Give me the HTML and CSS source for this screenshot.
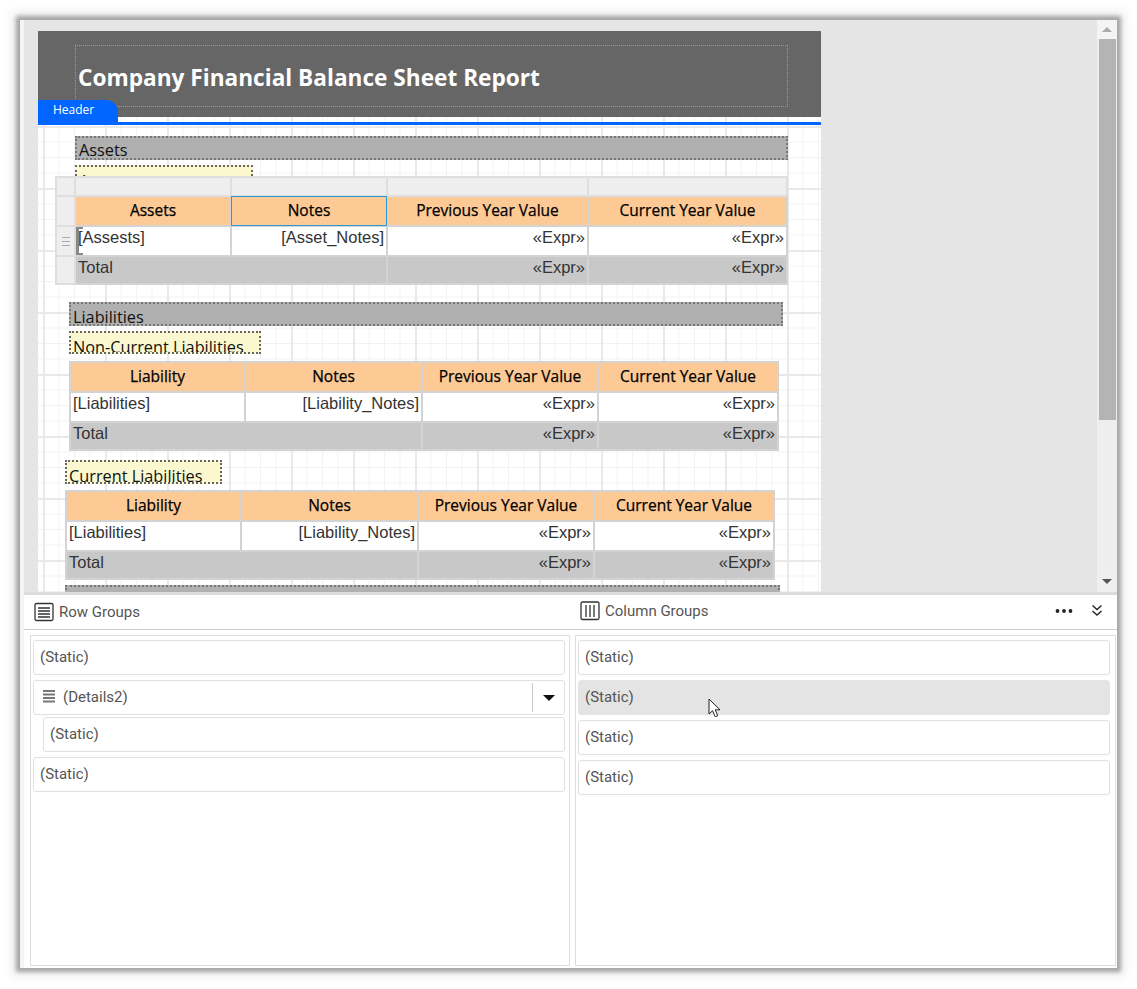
FILE: index.html
```html
<!DOCTYPE html>
<html lang="en">
<head>
  <meta charset="UTF-8" />
  <title>Report Designer</title>
  <link rel="stylesheet" href="styles.css">
</head>
<body>
  <div class="window">

    <div class="designer">
      <div class="canvas">
        <div class="page">
          <div class="page-header">
            <div class="title-box">Company Financial Balance Sheet Report</div>
            <div class="band-tab">Header</div>
          </div>
          <div class="band-line"></div>

          <div class="bar bar-assets">Assets</div>
          <div class="note note-assets">Assets</div>

          <table class="tablix tablix-assets">
            <colgroup>
              <col class="c-handle"><col class="c-a1"><col class="c-a2"><col class="c-a3"><col class="c-a4">
            </colgroup>
            <tr class="row-handle">
              <td class="handle"></td><td class="handle"></td><td class="handle"></td><td class="handle"></td><td class="handle"></td>
            </tr>
            <tr class="row-head">
              <td class="handle"></td>
              <th>Assets</th>
              <th class="selected">Notes</th>
              <th>Previous Year Value</th>
              <th>Current Year Value</th>
            </tr>
            <tr class="row-data">
              <td class="handle"><span class="grip"></span></td>
              <td class="focus-corner">[Assests]</td>
              <td class="num">[Asset_Notes]</td>
              <td class="num">«Expr»</td>
              <td class="num">«Expr»</td>
            </tr>
            <tr class="row-total">
              <td class="handle"></td>
              <td colspan="2">Total</td>
              <td class="num">«Expr»</td>
              <td class="num">«Expr»</td>
            </tr>
          </table>

          <div class="bar bar-liab">Liabilities</div>
          <div class="note note-noncurrent">Non-Current Liabilities</div>

          <table class="tablix tablix-noncurrent">
            <colgroup>
              <col class="c-l1"><col class="c-l2"><col class="c-l3"><col class="c-l4">
            </colgroup>
            <tr class="row-head">
              <th>Liability</th>
              <th>Notes</th>
              <th>Previous Year Value</th>
              <th>Current Year Value</th>
            </tr>
            <tr class="row-data">
              <td>[Liabilities]</td>
              <td class="num">[Liability_Notes]</td>
              <td class="num">«Expr»</td>
              <td class="num">«Expr»</td>
            </tr>
            <tr class="row-total">
              <td colspan="2">Total</td>
              <td class="num">«Expr»</td>
              <td class="num">«Expr»</td>
            </tr>
          </table>

          <div class="note note-current">Current Liabilities</div>

          <table class="tablix tablix-current">
            <colgroup>
              <col class="c-l1"><col class="c-l2"><col class="c-l3"><col class="c-l4">
            </colgroup>
            <tr class="row-head">
              <th>Liability</th>
              <th>Notes</th>
              <th>Previous Year Value</th>
              <th>Current Year Value</th>
            </tr>
            <tr class="row-data">
              <td>[Liabilities]</td>
              <td class="num">[Liability_Notes]</td>
              <td class="num">«Expr»</td>
              <td class="num">«Expr»</td>
            </tr>
            <tr class="row-total">
              <td colspan="2">Total</td>
              <td class="num">«Expr»</td>
              <td class="num">«Expr»</td>
            </tr>
          </table>

          <div class="bar bar-next"></div>
        </div>
      </div>

      <div class="scrollbar">
        <div class="scroll-btn"><span class="arrow-up"></span></div>
        <div class="scroll-thumb"></div>
        <div class="scroll-track"></div>
        <div class="scroll-btn scroll-btn-down"><span class="arrow-down"></span></div>
      </div>
    </div>

    <div class="groups">
      <div class="groups-head">
        <div class="groups-title groups-title-row">
          <svg width="20" height="20" viewBox="0 0 20 20" fill="none" stroke="#333" stroke-width="1.3">
            <rect x="1" y="1.5" width="18" height="17" rx="1.5"/>
            <path d="M4 6h12M4 9h12M4 12h12M4 15h12"/>
          </svg>
          <span>Row Groups</span>
        </div>
        <div class="groups-title groups-title-col">
          <svg width="20" height="20" viewBox="0 0 20 20" fill="none" stroke="#333" stroke-width="1.3">
            <rect x="1" y="1" width="18" height="17.5" rx="1.5"/>
            <path d="M6 4v12M10 4v12M14 4v12"/>
          </svg>
          <span>Column Groups</span>
        </div>
        <div class="groups-tools">
          <svg width="18" height="6" viewBox="0 0 18 6" fill="#222">
            <circle cx="2.5" cy="3" r="1.9"/><circle cx="9" cy="3" r="1.9"/><circle cx="15.5" cy="3" r="1.9"/>
          </svg>
          <svg width="12" height="13" viewBox="0 0 12 13" fill="none" stroke="#222" stroke-width="1.4">
            <path d="M1.5 1.5l4.5 4 4.5-4M1.5 7l4.5 4 4.5-4"/>
          </svg>
        </div>
      </div>

      <div class="groups-body">
        <div class="pane pane-row">
          <div class="group-item">(Static)</div>
          <div class="group-item group-item-details">
            <svg width="12" height="13" viewBox="0 0 12 13" fill="#777">
              <rect y="0" width="12" height="2"/><rect y="3.5" width="12" height="2"/><rect y="7" width="12" height="2"/><rect y="10.5" width="12" height="2"/>
            </svg>
            <span class="group-name">(Details2)</span>
            <span class="group-drop"><span class="arrow-drop"></span></span>
          </div>
          <div class="group-item group-item-child">(Static)</div>
          <div class="group-item group-item-last">(Static)</div>
        </div>
        <div class="pane pane-col">
          <div class="group-item">(Static)</div>
          <div class="group-item group-item-active">
            (Static)
            <svg class="cursor" width="14" height="20" viewBox="0 0 14 20">
              <path d="M1 1v15l3.6-3.3 2.6 6 2.6-1.1-2.6-5.8H12z" fill="#fff" stroke="#222" stroke-width="1"/>
            </svg>
          </div>
          <div class="group-item">(Static)</div>
          <div class="group-item">(Static)</div>
        </div>
      </div>
    </div>

  </div>
</body>
</html>
```

FILE: styles.css
```css
:root {
  --line: #d3d3d3;
  --orange: #fdca96;
  --total: #c8c8c8;
  --handle: #eeeeee;
  --blue: #0066ff;
}

html, body {
  height: 100%;
}

body {
  margin: 0;
  background: #fff;
  overflow: hidden;
  font-family: Roboto, sans-serif;
}

.window {
  margin: 20px 20px 0;
  width: 1097px;
  height: 948px;
  padding-left: 4px;
  box-sizing: border-box;
  background: #f4f4f4;
  box-shadow: 0 0 4px 4px rgba(0, 0, 0, 0.3), 0 0 10px 8px rgba(0, 0, 0, 0.08);
  display: flex;
  flex-direction: column;
}

/* design surface */
.designer {
  display: flex;
  height: 575px;
  flex: none;
  border-bottom: 3px solid #ddd;
  box-sizing: border-box;
}

.canvas {
  flex: 1;
  background: #e5e5e5;
  padding: 11px 0 0 14px;
  overflow: hidden;
}

.page {
  width: 783px;
  height: 700px;
  background-color: #fff;
  background-image:
    linear-gradient(to right, #e9e9e9 2px, transparent 2px),
    linear-gradient(to bottom, #e9e9e9 2px, transparent 2px),
    linear-gradient(to right, #f2f2f2 1px, transparent 1px),
    linear-gradient(to bottom, #f2f2f2 1px, transparent 1px);
  background-size: 62px 62px, 62px 62px, 15.5px 15.5px, 15.5px 15.5px;
  background-position: 5px 0, 0 33px, 5px 0, 0 2px;
  overflow: hidden;
}

.page-header {
  position: relative;
  background: #666;
  height: 86px;
  padding: 14px 33px 0 37px;
  box-sizing: border-box;
}

.title-box {
  height: 62px;
  border: 1px dotted #999;
  box-sizing: border-box;
  padding: 17px 0 0 2px;
  color: #fff;
  font: bold 22.65px/30px "Open Sans", sans-serif;
  white-space: nowrap;
}

.band-tab {
  position: absolute;
  left: 0;
  top: 69px;
  width: 80px;
  height: 25px;
  background: var(--blue);
  border-top-right-radius: 12px;
  color: #fff;
  font: 12px/20px "Open Sans", sans-serif;
  padding-left: 15px;
  box-sizing: border-box;
}

.band-line {
  height: 8px;
  box-sizing: border-box;
  border-bottom: 3px solid var(--blue);
}

.bar {
  box-sizing: border-box;
  height: 24px;
  background: #b0b0b0;
  border: 2px dotted #777;
  padding: 1px 0 0 2px;
  color: #111;
  font: 16.3px/22px "Open Sans", sans-serif;
  overflow: hidden;
}

.bar-assets {
  margin: 11px 33px 0 37px;
}

.bar-liab {
  margin: 17px 38px 0 31px;
  padding-top: 2px;
}

.bar-next {
  margin: 5px 41px 0 27px;
}

.note {
  box-sizing: border-box;
  height: 23px;
  background: #fbf8d0;
  border: 2px dotted #666;
  padding: 3px 0 0 2px;
  color: #111;
  font: 16.3px/22px "Open Sans", sans-serif;
  overflow: hidden;
  white-space: nowrap;
}

.note-assets {
  width: 178px;
  margin: 5px 0 -12px 37px;
}

.note-noncurrent {
  width: 192px;
  margin: 5px 0 7px 31px;
}

.note-current {
  width: 157px;
  height: 24px;
  margin: 9px 0 6px 27px;
}

/* report tables */
.tablix {
  position: relative;
  border-collapse: collapse;
  table-layout: fixed;
  background: #fff;
  color: #333;
  font: 16.5px/20px "Liberation Sans", sans-serif;
}

.tablix td, .tablix th {
  border: 2px solid var(--line);
  padding: 0 2px;
  box-sizing: border-box;
  overflow: hidden;
  white-space: nowrap;
}

.tablix th {
  background: var(--orange);
  color: #000;
  font: 500 15.5px/20px "Open Sans", sans-serif;
  -webkit-text-stroke: 0.25px #000;
  text-align: center;
  vertical-align: middle;
  padding-bottom: 2px;
}

.tablix-assets { width: 731px; margin-left: 17px; }
.tablix-noncurrent { width: 708px; margin-left: 31px; }
.tablix-current { width: 708px; margin-left: 27px; }

.c-handle { width: 19px; }
.c-a1 { width: 156px; }
.c-a2 { width: 156px; }
.c-a3 { width: 201px; }
.c-a4 { width: 199px; }

.c-l1 { width: 175px; }
.c-l2 { width: 177px; }
.c-l3 { width: 176px; }
.c-l4 { width: 180px; }

.row-handle td { height: 19px; }
.row-head th, .row-head td { height: 30px; }
.row-data td { height: 30px; vertical-align: top; padding-top: 0; }
.row-total td { height: 28px; vertical-align: top; padding-top: 0; background: var(--total); }

.tablix .handle {
  background: var(--handle);
  border-color: #dedede;
  padding: 0;
  vertical-align: middle;
  text-align: center;
}

.tablix .num {
  text-align: right;
}

.tablix th.selected {
  outline: 1px solid #2a9ad8;
  outline-offset: -1px;
}

.grip {
  display: block;
  width: 8px;
  height: 7px;
  margin: 0 auto;
  border-top: 1px solid #aaa;
  border-bottom: 1px solid #aaa;
  background: linear-gradient(#aaa, #aaa) 0 50% / 100% 1px no-repeat;
}

.focus-corner {
  background:
    linear-gradient(#888, #888) 0 0 / 3px 100% no-repeat,
    linear-gradient(#888, #888) 0 0 / 7px 2px no-repeat,
    linear-gradient(#888, #888) 0 100% / 7px 2px no-repeat;
}

/* scrollbar */
.scrollbar {
  width: 20px;
  flex: none;
  display: flex;
  flex-direction: column;
  background: #eee;
}

.scroll-btn {
  height: 19px;
  background: #f4f4f4;
  display: flex;
  align-items: center;
  justify-content: center;
  flex: none;
}

.scroll-btn-down {
  height: 22px;
  background: #efefef;
}

.arrow-up {
  border: 5px solid transparent;
  border-top: 0;
  border-bottom: 5px solid #aaa;
}

.arrow-down {
  border: 5px solid transparent;
  border-bottom: 0;
  border-top: 5px solid #555;
}

.scroll-thumb {
  height: 381px;
  margin: 0 1px 0 2px;
  background: #b4b4b4;
  flex: none;
}

.scroll-track {
  flex: 1;
}

/* groups panel */
.groups {
  flex: 1;
  display: flex;
  flex-direction: column;
  min-height: 0;
  background: #fff;
}

.groups-head {
  height: 35px;
  flex: none;
  display: flex;
  align-items: center;
  border-bottom: 1px solid #ccc;
  box-sizing: border-box;
  position: relative;
  color: #555;
  font-size: 15px;
}

.groups-title {
  display: flex;
  align-items: center;
  gap: 5px;
}

.groups-title-row {
  width: 556px;
  padding: 0 0 0 10px;
  box-sizing: border-box;
}

.groups-title-col {
  flex: 1;
  margin-top: -2px;
}

.groups-tools {
  display: flex;
  align-items: center;
  gap: 18px;
  padding-right: 14px;
  margin-top: -3px;
}

.groups-body {
  flex: 1;
  display: flex;
  gap: 5px;
  padding: 5px 1px 2px 6px;
  min-height: 0;
}

.pane {
  flex: 1;
  border: 1px solid #ddd;
  padding: 4px 5px 0 2px;
  box-sizing: border-box;
  min-width: 0;
}

.pane-row {
  flex: none;
  width: 540px;
  padding-right: 4px;
}

.pane-col {
  padding-right: 5px;
}

.group-item {
  position: relative;
  display: flex;
  align-items: center;
  height: 35px;
  margin-bottom: 5px;
  padding: 0 0 2px 6px;
  box-sizing: border-box;
  border: 1px solid #e0e0e0;
  border-radius: 3px;
  background: #fff;
  color: #555;
  font-size: 15px;
}

.group-item-details {
  margin-bottom: 2px;
  padding-left: 9px;
}

.group-name {
  margin-left: 8px;
  flex: 1;
}

.group-drop {
  width: 31px;
  height: 29px;
  margin-top: 2px;
  border-left: 1px solid #ccc;
  display: flex;
  align-items: center;
  justify-content: center;
}

.arrow-drop {
  border: 6px solid transparent;
  border-bottom: 0;
  border-top: 6px solid #111;
}

.group-item-child {
  margin-left: 10px;
}

.group-item-active {
  background: #e4e4e4;
  border-color: #e4e4e4;
}

.cursor {
  position: absolute;
  left: 129px;
  top: 17px;
}
```
